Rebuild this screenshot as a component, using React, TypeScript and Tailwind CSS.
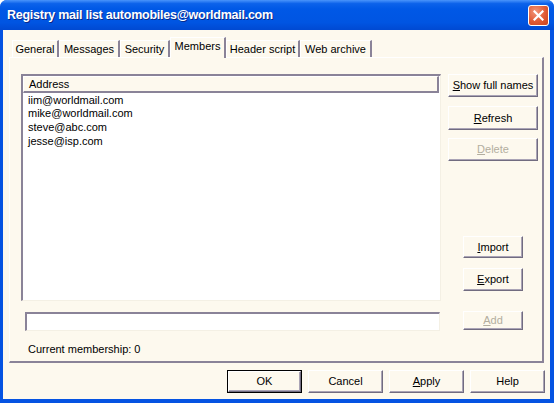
import React from "react"

const face = "bg-[#fdf9ee]"

const Btn = ({
  children,
  className = "",
  disabled = false,
  isDefault = false,
}: {
  children: React.ReactNode
  className?: string
  disabled?: boolean
  isDefault?: boolean
}) => {
  const inner = (
    <div
      className={`flex h-full w-full items-center justify-center ${face} border-t border-l border-t-white border-l-white border-r border-b border-r-[#716c80] border-b-[#716c80] shadow-[inset_-1px_-1px_0_#aaa4b6] ${
        disabled ? "text-[#b3ae9f]" : "text-black"
      }`}
    >
      {children}
    </div>
  )
  if (isDefault) {
    return <div className={`border border-black ${className}`}>{inner}</div>
  }
  return <div className={className}>{inner}</div>
}

const tabs: [string, number][] = [
  ["General", 47],
  ["Messages", 61],
  ["Security", 50],
  ["Members", 56],
  ["Header script", 74],
  ["Web archive", 72],
]

const members = ["iim@worldmail.com", "mike@worldmail.com", "steve@abc.com", "jesse@isp.com"]

export default function App() {
  return (
    <div className="flex h-[403px] w-[554px] flex-col overflow-hidden rounded-t-[7px] bg-[#0553e2] font-['Liberation_Sans',Arial,sans-serif] text-[11px] text-black">
      {/* title bar */}
      <div className="flex h-[30px] shrink-0 items-center justify-between bg-[linear-gradient(to_bottom,#4a94fb_0%,#0c62ea_12%,#0058e6_30%,#0055e2_75%,#0049d2_100%)] pl-[7px] pr-[5px]">
        <span className="text-[12.5px] font-bold tracking-[-0.25px] text-white [text-shadow:1px_1px_0_#0a2a8a]">
          Registry mail list automobiles@worldmail.com
        </span>
        <div className="flex h-[21px] w-[21px] items-center justify-center rounded-[3px] border border-white bg-[radial-gradient(circle_at_35%_30%,#f2967a,#e05a34_55%,#c8421e)]">
          <svg width="11" height="11" viewBox="0 0 11 11">
            <path d="M1.5 1.5L9.5 9.5M9.5 1.5L1.5 9.5" stroke="white" strokeWidth="2.2" strokeLinecap="square" />
          </svg>
        </div>
      </div>

      {/* client area */}
      <div className={`mb-[4px] ml-[3px] mr-[4px] flex flex-1 flex-col px-[6px] pt-[7px] ${face}`}>
        {/* tabs */}
        <div className="relative z-10 flex h-[20px] items-end pl-[3px]">
          {tabs.map(([name, w]) => {
            const selected = name === "Members"
            return (
              <div
                key={name}
                style={{ width: w }}
                className={`flex items-center justify-center border-t border-l border-t-white border-l-white border-r-2 border-r-[#8a8398] ${face} ${
                  selected ? "mb-[-1px] h-[21px] pb-[3px]" : "h-[17px]"
                }`}
              >
                {name}
              </div>
            )
          })}
        </div>

        {/* tab panel */}
        <div className="flex h-[306px] border-t border-l border-t-white border-l-white border-r-2 border-b-2 border-r-[#8a8398] border-b-[#8a8398] pl-[11px] pt-[16px]">
          <div className="flex w-[420px] flex-col">
            <div className="flex h-[227px] flex-col border-t-2 border-l-2 border-t-[#8a8398] border-l-[#8a8398] border-r border-b border-r-[#f4f0e4] border-b-[#f4f0e4] bg-white">
              <div className={`flex h-[17px] w-[416px] items-center border-t border-l border-t-white border-l-white border-r-2 border-b-2 border-r-[#8a8398] border-b-[#8a8398] pl-[5px] ${face}`}>
                Address
              </div>
              <div className="flex flex-col pl-[5px]">
                {members.map((m) => (
                  <div key={m} className="flex h-[13.7px] items-center">
                    {m}
                  </div>
                ))}
              </div>
            </div>
            <div className="ml-[4px] mt-[11px] h-[19px] w-[415px] border-t-2 border-l-2 border-t-[#8a8398] border-l-[#8a8398] border-r border-b border-r-[#f4f0e4] border-b-[#f4f0e4] bg-white" />
            <div className="ml-[7px] mt-[11px] leading-[14px]">Current membership: 0</div>
          </div>

          <div className="ml-[7px] flex w-[90px] flex-col items-center">
            <Btn className="h-[23px] w-[90px]">
              <span>
                <u>S</u>how full names
              </span>
            </Btn>
            <Btn className="mt-[9px] h-[24px] w-[90px]">
              <span>
                <u>R</u>efresh
              </span>
            </Btn>
            <Btn className="mt-[8px] h-[23px] w-[90px]" disabled>
              <span>
                <u>D</u>elete
              </span>
            </Btn>
            <Btn className="mt-[75px] h-[22px] w-[60px]">
              <span>
                <u>I</u>mport
              </span>
            </Btn>
            <Btn className="mt-[10px] h-[23px] w-[60px]">
              <span>
                <u>E</u>xport
              </span>
            </Btn>
            <Btn className="mt-[20px] h-[19px] w-[60px]" disabled>
              <span>
                <u>A</u>dd
              </span>
            </Btn>
          </div>
        </div>

        {/* dialog buttons */}
        <div className="-mr-[1px] mt-[7px] flex justify-end gap-[6px]">
          <Btn className="h-[23px] w-[75px]" isDefault>
            OK
          </Btn>
          <Btn className="h-[23px] w-[75px]">Cancel</Btn>
          <Btn className="h-[23px] w-[75px]">
            <span>
              <u>A</u>pply
            </span>
          </Btn>
          <Btn className="h-[23px] w-[75px]">Help</Btn>
        </div>
      </div>
    </div>
  )
}
